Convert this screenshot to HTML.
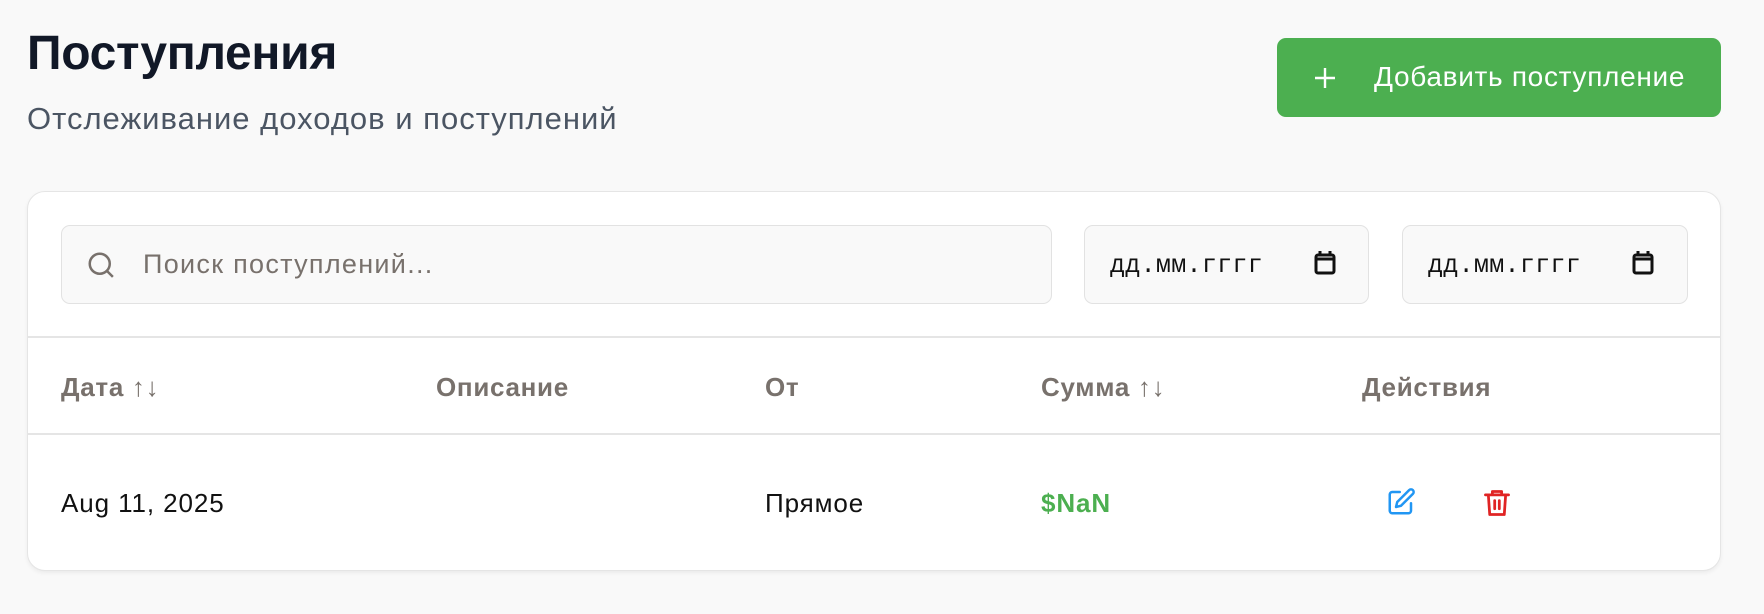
<!DOCTYPE html>
<html><head><meta charset="utf-8"><style>
*{box-sizing:border-box;margin:0;padding:0}
body{width:1764px;height:614px;background:#f9f9f9;font-family:"Liberation Sans","DejaVu Sans",sans-serif;position:relative;overflow:hidden}
.abs{position:absolute;white-space:nowrap}
h1{position:absolute;left:27px;top:26px;font-size:48px;font-weight:700;color:#111827;letter-spacing:-0.3px}
.sub{left:27px;top:101px;font-size:31px;color:#4b5563;letter-spacing:1px}
.btn{position:absolute;left:1277px;top:38px;width:444px;height:79px;background:#4caf50;border-radius:9px;color:#fff}
.card{position:absolute;left:27px;top:191px;width:1694px;height:380px;background:#fff;border:1.5px solid #e5e5e5;border-radius:18px;box-shadow:0 2px 4px rgba(0,0,0,.06)}
.inp{position:absolute;top:33px;height:79px;background:#f9f9f9;border:1.5px solid #e2e2e2;border-radius:9px}
.line{position:absolute;left:0;right:0;height:2px;background:#e5e5e5}
.th{font-size:26px;color:#78716c;font-weight:600;top:180px;letter-spacing:0.7px}
.td{font-size:26px;color:#111;top:296px;letter-spacing:0.9px}
</style></head><body>
<h1>Поступления</h1>
<div class="abs sub">Отслеживание доходов и поступлений</div>
<div class="btn">
<svg class="abs" style="left:36px;top:28px" width="24" height="24" viewBox="0 0 24 24"><path d="M12 2v20M2 12h20" stroke="#fff" stroke-width="2.4"/></svg>
<div class="abs" style="left:97px;top:23px;font-size:28px;letter-spacing:0.7px">Добавить поступление</div>
</div>
<div class="card">
<div class="inp" style="left:33px;width:991px">
<svg class="abs" style="left:24px;top:24px" width="30" height="30" viewBox="0 0 24 24" fill="none" stroke="#78716c" stroke-width="2"><circle cx="11" cy="11" r="8"/><path d="M17 17l4.5 4.5"/></svg>
<div class="abs" style="left:81px;top:23px;font-size:27px;color:#78716c;letter-spacing:1.3px">Поиск поступлений...</div>
</div>
<div class="inp" style="left:1056px;width:285px">
<div class="abs" style="left:25px;top:25px;font-size:25px;font-family:'Liberation Mono',monospace;color:#111;letter-spacing:0.3px">дд.мм.гггг</div>
<svg class="abs" style="left:229px;top:24px" width="22" height="26" viewBox="0 0 22 26" fill="none" stroke="#111" stroke-width="3"><rect x="2" y="5" width="18" height="18" rx="2"/><path d="M2 9h18M6 1v5M16 1v5"/></svg>
</div>
<div class="inp" style="left:1374px;width:286px">
<div class="abs" style="left:25px;top:25px;font-size:25px;font-family:'Liberation Mono',monospace;color:#111;letter-spacing:0.3px">дд.мм.гггг</div>
<svg class="abs" style="left:229px;top:24px" width="22" height="26" viewBox="0 0 22 26" fill="none" stroke="#111" stroke-width="3"><rect x="2" y="5" width="18" height="18" rx="2"/><path d="M2 9h18M6 1v5M16 1v5"/></svg>
</div>
<div class="line" style="top:144px"></div>
<div class="abs th" style="left:33px">Дата ↑↓</div>
<div class="abs th" style="left:408px">Описание</div>
<div class="abs th" style="left:737px">От</div>
<div class="abs th" style="left:1013px">Сумма ↑↓</div>
<div class="abs th" style="left:1334px">Действия</div>
<div class="line" style="top:241px"></div>
<div class="abs td" style="left:33px">Aug 11, 2025</div>
<div class="abs td" style="left:737px">Прямое</div>
<div class="abs td" style="left:1013px;color:#4caf50;font-weight:700">$NaN</div>
<svg class="abs" style="left:1358px;top:295px" width="30" height="30" viewBox="0 0 24 24" fill="none" stroke="#2196f3" stroke-width="2" stroke-linecap="round" stroke-linejoin="round"><path d="M11 4H5a2 2 0 0 0-2 2v13a2 2 0 0 0 2 2h13a2 2 0 0 0 2-2v-6"/><path d="M18.5 2.5a2.1 2.1 0 0 1 3 3L12 15l-4 1 1-4z"/></svg>
<svg class="abs" style="left:1455px;top:296px" width="28" height="30" viewBox="0 0 24 26" fill="none" stroke="#e02424" stroke-width="2.4" stroke-linecap="round" stroke-linejoin="round"><path d="M2 6h20M8 6V3h8v3M4.5 6l1.2 17h12.6L19.5 6M10 11v7M14 11v7"/></svg>
</div>
</body></html>
